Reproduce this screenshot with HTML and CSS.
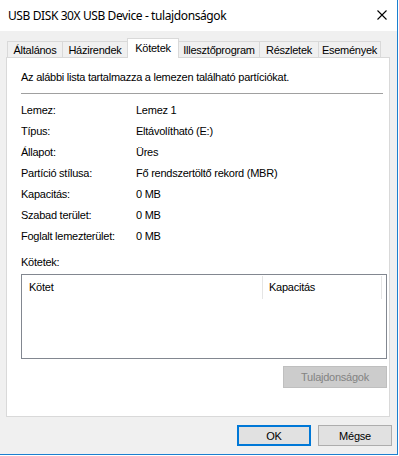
FILE: index.html
```
<!DOCTYPE html>
<html>
<head>
<meta charset="utf-8">
<link rel="stylesheet" href="styles.css">
</head>
<body>
<div class="window">
  <div class="titlebar">
    <span class="title">USB DISK 30X USB Device - tulajdonságok</span>
    <svg class="close" width="10" height="10" viewBox="0 0 10 10"><path d="M0.5 0.5 L9.5 9.5 M9.5 0.5 L0.5 9.5" stroke="#000" stroke-width="1.1" fill="none"/></svg>
  </div>
  <div class="tabs">
    <div class="tab">Általános</div>
    <div class="tab">Házirendek</div>
    <div class="tab sel">Kötetek</div>
    <div class="tab">Illesztőprogram</div>
    <div class="tab">Részletek</div>
    <div class="tab last">Események</div>
  </div>
  <div class="panel">
    <div class="intro">Az alábbi lista tartalmazza a lemezen található partíciókat.</div>
    <div class="sep"></div>
    <div class="info">
      <div class="lbl">Lemez:</div><div class="val">Lemez 1</div>
      <div class="lbl">Típus:</div><div class="val">Eltávolítható (E:)</div>
      <div class="lbl">Állapot:</div><div class="val">Üres</div>
      <div class="lbl">Partíció stílusa:</div><div class="val">Fő rendszertöltő rekord (MBR)</div>
      <div class="lbl">Kapacitás:</div><div class="val">0 MB</div>
      <div class="lbl">Szabad terület:</div><div class="val">0 MB</div>
      <div class="lbl">Foglalt lemezterület:</div><div class="val">0 MB</div>
    </div>
    <div class="vol-label">Kötetek:</div>
    <div class="list">
      <div class="list-head">
        <div class="col c1">Kötet</div>
        <div class="col c2">Kapacitás</div>
      </div>
    </div>
    <div class="prop-row">
      <div class="btn disabled">Tulajdonságok</div>
    </div>
  </div>
  <div class="footer">
    <div class="btn ok">OK</div>
    <div class="btn">Mégse</div>
  </div>
</div>
</body>
</html>
```
FILE: styles.css
```
html, body {
  margin: 0;
  padding: 0;
  background: #ffffff;
}
body {
  font-family: "Liberation Sans", Arial, sans-serif;
  font-size: 11px;
  letter-spacing: -0.25px;
  color: #000;
}
.window {
  width: 398px;
  height: 455px;
  box-sizing: border-box;
  background: #f0f0f0;
  border-right: 1px solid #1c7fd0;
  border-bottom: 1px solid #1c7fd0;
  display: flex;
  flex-direction: column;
}
.titlebar {
  height: 31px;
  flex: none;
  background: #ffffff;
  display: flex;
  align-items: center;
  padding-left: 8px;
  padding-right: 10px;
  padding-bottom: 1px;
  box-sizing: border-box;
}
.title {
  flex: 1;
  font-family: "Noto Sans", "Liberation Sans", sans-serif;
  font-size: 12px;
  letter-spacing: -0.4px;
}
.close {
  display: block;
}
.tabs {
  height: 26px;
  flex: none;
  display: flex;
  align-items: flex-end;
  padding-left: 7px;
}
.tab {
  height: 16px;
  box-sizing: border-box;
  border-top: 1px solid #d9d9d9;
  border-left: 1px solid #d9d9d9;
  background: #f0f0f0;
  display: flex;
  align-items: center;
  justify-content: center;
  padding-top: 1px;
  white-space: nowrap;
}
.tab:nth-child(1) { width: 55px; }
.tab:nth-child(2) { width: 65px; }
.tab:nth-child(3) { width: 52px; }
.tab:nth-child(4) { width: 80px; }
.tab:nth-child(5) { width: 59px; }
.tab:nth-child(6) { width: 63px; }
.tab.last {
  border-right: 1px solid #d9d9d9;
}
.tab.sel {
  height: 20px;
  margin-bottom: -1px;
  background: #ffffff;
  border-right: 1px solid #d9d9d9;
  position: relative;
  z-index: 1;
  padding-top: 0;
  padding-bottom: 2px;
}
.tab.sel + .tab {
  border-left: 0;
}
.panel {
  margin-left: 6px;
  width: 384px;
  height: 360px;
  flex: none;
  box-sizing: border-box;
  border: 1px solid #d9d9d9;
  background: #ffffff;
  padding: 13px 2px 0 14px;
  display: flex;
  flex-direction: column;
}
.intro {
  line-height: 13px;
}
.sep {
  margin-top: 9px;
  width: 362px;
  height: 1px;
  background: #a0a0a0;
}
.info {
  margin-top: 5px;
  display: grid;
  grid-template-columns: 115px 1fr;
  grid-auto-rows: 21px;
  align-items: center;
}
.vol-label {
  margin-top: 10px;
  line-height: 13px;
}
.list {
  margin-top: 5px;
  width: 366px;
  height: 85px;
  box-sizing: border-box;
  border: 1px solid #828790;
  background: #ffffff;
}
.list-head {
  display: flex;
  padding-top: 1px;
}
.col {
  height: 23px;
  box-sizing: border-box;
  border-right: 1px solid #e5e5e5;
  display: flex;
  align-items: center;
  padding-bottom: 2px;
}
.c1 {
  width: 241px;
  padding-left: 7px;
}
.c2 {
  width: 119px;
  padding-left: 6px;
}
.prop-row {
  display: flex;
  justify-content: flex-end;
  margin-top: 7px;
}
.btn {
  width: 74px;
  height: 21px;
  box-sizing: border-box;
  border: 1px solid #adadad;
  background: #e1e1e1;
  display: flex;
  align-items: center;
  justify-content: center;
}
.btn.disabled {
  width: 104px;
  height: 22px;
  background: #cccccc;
  border-color: #bfbfbf;
  color: #838383;
}
.btn.ok {
  border: 2px solid #0078d7;
}
.footer {
  display: flex;
  justify-content: flex-end;
  gap: 7px;
  margin-top: 8px;
  padding-right: 5px;
}
```
